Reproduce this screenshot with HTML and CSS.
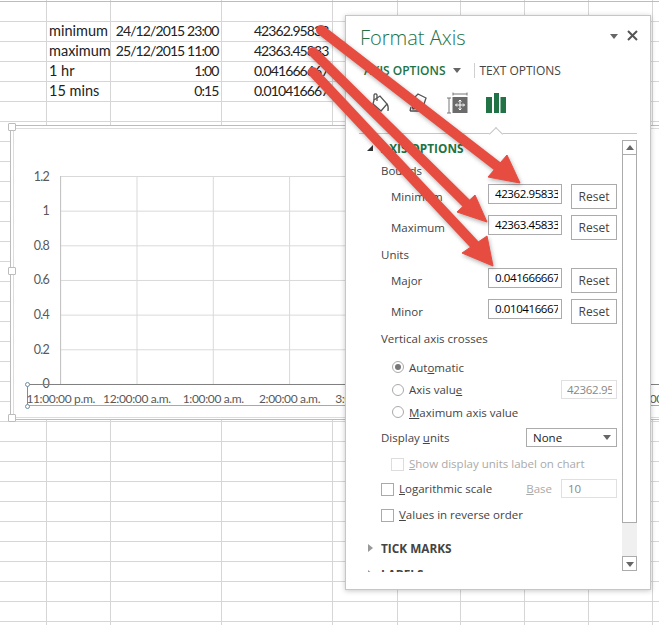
FILE: index.html
```html
<!DOCTYPE html>
<html lang="en">
<head>
<meta charset="utf-8">
<title>Format Axis</title>
<link rel="stylesheet" href="styles.css">
</head>
<body>
<div class="sheet">
  <div class="cells">
    <div></div><div class="cell">minimum</div><div class="cell num">24/12/2015 23:00</div><div class="cell num">42362.95833</div>
    <div></div><div class="cell">maximum</div><div class="cell num">25/12/2015 11:00</div><div class="cell num">42363.45833</div>
    <div></div><div class="cell">1 hr</div><div class="cell num">1:00</div><div class="cell num">0.041666667</div>
    <div></div><div class="cell">15 mins</div><div class="cell num">0:15</div><div class="cell num">0.010416667</div>
  </div>

  <div class="chart">
    <div class="chart-inner"></div>
    <div class="plot"></div>
    <div class="yaxis"><span>1.2</span><span>1</span><span>0.8</span><span>0.6</span><span>0.4</span><span>0.2</span><span>0</span></div>
    <div class="axis-line"></div>
    <div class="axis-box"></div>
    <i class="dot dot-top"></i><i class="dot dot-bottom"></i>
    <div class="xaxis"><span>11:00:00 p.m.</span><span>12:00:00 a.m.</span><span>1:00:00 a.m.</span><span>2:00:00 a.m.</span><span>3:00:00 a.m.</span><span>4:00:00 a.m.</span><span>5:00:00 a.m.</span><span>6:00:00 a.m.</span><span>7:00:00 a.m.</span></div>
    <i class="grip grip-tl"></i><i class="grip grip-ml"></i><i class="grip grip-bl"></i>
  </div>

  <aside class="panel">
    <header class="panel-head">
      <h1 class="panel-title">Format Axis</h1>
      <span class="caret head-caret"></span>
      <svg class="close" width="11" height="11" viewBox="0 0 11 11"><path d="M1 1l9 9M10 1l-9 9" stroke="#555" stroke-width="2" fill="none"/></svg>
    </header>
    <nav class="tabs">
      <span class="tab-active">AXIS OPTIONS</span>
      <span class="caret tab-caret"></span>
      <span class="tab-sep"></span>
      <span class="tab">TEXT OPTIONS</span>
    </nav>
    <div class="icons">
      <svg width="20" height="22" viewBox="0 0 20 22" fill="none" stroke="#555" stroke-width="1.3"><path d="M4 8l6-4 7 8-6 7-8-7z"/><path d="M4 8V3a1.600 1.600 0 0 1 3 0v6"/><path d="M17 12c1.500 2 1.500 4 1 7"/></svg>
      <svg width="20" height="22" viewBox="0 0 20 22" fill="none" stroke="#555" stroke-width="1.3"><path d="M3 9l7-7 8 4-3 9-10 2z"/><path d="M2 19l1-4M2 19h10"/></svg>
      <svg width="22" height="22" viewBox="0 0 22 22"><path d="M7 2h14M7 .5v3M21 .5v3M1 6h4M3 6v15M1 21h4" stroke="#777" fill="none"/><rect x="6.500" y="5" width="15" height="16" fill="#6b6b6b"/><path d="M14 8v10M9.500 13h9M12.500 9.500L14 8l1.500 1.500M12.500 16.500L14 18l1.500-1.500M11 11.500L9.500 13l1.500 1.500M17 11.500l1.500 1.500-1.500 1.500" stroke="#fff" fill="none"/></svg>
      <svg width="21" height="22" viewBox="0 0 21 22"><path d="M0 5h6v16H0zM8 1h5v20H8zM14.500 5H20v16h-5.500z" fill="#217346"/></svg>
    </div>
    <div class="rule"></div>
    <div class="body">
      <div class="content">
        <div class="section section-open"><i class="tri-open"></i>AXIS OPTIONS</div>
        <div class="label">Bounds</div>
        <div class="field field-first"><span class="field-name">Minimum</span><span class="input"><span>42362.95833</span></span><span class="btn">Reset</span></div>
        <div class="field"><span class="field-name">Maximum</span><span class="input"><span>42363.45833</span></span><span class="btn">Reset</span></div>
        <div class="label label-units">Units</div>
        <div class="field field-major"><span class="field-name">Major</span><span class="input"><span>0.041666667</span></span><span class="btn">Reset</span></div>
        <div class="field"><span class="field-name">Minor</span><span class="input"><span>0.010416667</span></span><span class="btn">Reset</span></div>
        <div class="label label-cross">Vertical axis crosses</div>
        <div class="radio radio-first"><i class="radio-mark radio-on"></i>Aut<u>o</u>matic</div>
        <div class="radio"><i class="radio-mark"></i>Axis valu<u>e</u><span class="input-off"><span>42362.95</span></span></div>
        <div class="radio"><i class="radio-mark"></i><u>M</u>aximum axis value</div>
        <div class="units-row"><span>Display <u>u</u>nits</span><span class="select">None<i class="caret select-caret"></i></span></div>
        <div class="check check-off"><i class="box"></i><span><u>S</u>how display units label on chart</span></div>
        <div class="check check-log"><i class="box box-on"></i><span><u>L</u>ogarithmic scale</span><span class="base"><u>B</u>ase</span><span class="input-base">10</span></div>
        <div class="check check-rev"><i class="box box-on"></i><span><u>V</u>alues in reverse order</span></div>
        <div class="section section-tick"><i class="tri-closed"></i>TICK MARKS</div>
        <div class="section section-labels"><i class="tri-closed"></i>LABELS</div>
      </div>
      <div class="scroll">
        <div class="scroll-btn"><i class="arrow-up"></i></div>
        <div class="scroll-thumb"></div>
        <div class="scroll-track"></div>
        <div class="scroll-btn"><i class="arrow-down"></i></div>
      </div>
    </div>
  </aside>

  <svg class="arrows" width="659" height="625" viewBox="0 0 659 625">
    <g fill="#e74c41" stroke="#e74c41" stroke-linejoin="round">
      <path d="M321 30L497 166" stroke-width="10" stroke-linecap="round"/>
      <path d="M520 183L507 155L488 177Z" stroke-width="1"/>
      <path d="M313 52L466 203" stroke-width="10" stroke-linecap="round"/>
      <path d="M487 222L475 195L457 212Z" stroke-width="1"/>
      <path d="M313 72L474 244" stroke-width="10" stroke-linecap="round"/>
      <path d="M493 266L487 236L462 253Z" stroke-width="1"/>
    </g>
  </svg>
</div>
</body>
</html>
```
FILE: styles.css
```css
* { box-sizing: border-box; }
html, body { margin: 0; padding: 0; background: #fff; }
body { width: 659px; height: 625px; overflow: hidden; }
i { display: block; font-style: normal; }

.sheet {
  position: relative;
  width: 659px;
  height: 625px;
  overflow: hidden;
  padding-top: 21px;
  font-family: Lato, sans-serif;
  color: #222;
  background-color: #fff;
  --g: linear-gradient(#d6d6d6, #d6d6d6);
  background-image:
    linear-gradient(#bdbdbd, #bdbdbd),
    var(--g), var(--g), var(--g), var(--g), var(--g), var(--g), var(--g), var(--g), var(--g),
    linear-gradient(to top, #d6d6d6 1px, transparent 1px);
  background-repeat: no-repeat, no-repeat, no-repeat, no-repeat, no-repeat, no-repeat, no-repeat, no-repeat, no-repeat, no-repeat, repeat-y;
  background-size: 100% 1px, 1px 100%, 1px 100%, 1px 100%, 1px 100%, 1px 100%, 1px 100%, 1px 100%, 1px 100%, 1px 100%, 100% 20px;
  background-position: 0 1px, 46px 0, 110px 0, 221px 0, 332px 0, 397px 0, 460px 0, 524px 0, 588px 0, 652px 0, 0 2px;
}

.cells {
  display: grid;
  grid-template-columns: minmax(0, 49px) minmax(0, 61px) minmax(0, 111px) minmax(0, 110px);
  width: 331px;
  grid-auto-rows: 20px;
  font-size: 14.500px;
  line-height: 20px;
  color: #222;
}
.cell { white-space: nowrap; min-width: 0; }
.num {
  text-align: right;
  padding-right: 2.500px;
  font-size: 14px;
  letter-spacing: -.9px;
}

/* chart */
.chart {
  position: absolute;
  left: 10px;
  top: 125px;
  width: 720px;
  height: 295px;
  background: #fff;
  border: 1.500px solid #bcbcbc;
  border-right: 0;
  font-size: 12px;
  color: #595959;
}
.chart-inner {
  position: absolute;
  inset: 1.500px 0 1px 1.500px;
  border: 1px solid #dcdcdc;
  border-right: 0;
}
.plot {
  position: absolute;
  left: 49px;
  top: 49.500px;
  width: 320px;
  height: 208px;
  border-left: 1px solid #c4c4c4;
  background-image:
    linear-gradient(#d9d9d9 1px, transparent 1px),
    linear-gradient(to right, #d9d9d9 1px, transparent 1px);
  background-size: 100% 34.670px, 76.300px 100%;
  background-position: 0 0, 75.500px 0;
}
.yaxis {
  position: absolute;
  left: 8px;
  top: 41.500px;
  width: 30px;
  height: 226px;
  display: flex;
  flex-direction: column;
  justify-content: space-between;
  align-items: flex-end;
  font-size: 12.500px;
  letter-spacing: -.7px;
  line-height: 18px;
}
.axis-line {
  position: absolute;
  left: 17px;
  top: 257.500px;
  right: 0;
  height: 1px;
  background: #808080;
}
.axis-box {
  position: absolute;
  left: 16px;
  top: 258px;
  right: 0;
  height: 22px;
  border-left: 1px solid #8a8a8a;
  border-bottom: 1px solid #a8a8a8;
}
.dot {
  position: absolute;
  left: 14px;
  width: 5px;
  height: 5px;
  border: 1px solid #6b8ea6;
  border-radius: 50%;
  background: #fff;
}
.dot-top { top: 255.500px; }
.dot-bottom { top: 277.500px; }
.xaxis {
  position: absolute;
  left: 11.500px;
  top: 265px;
  display: flex;
  white-space: nowrap;
  line-height: 16px;
  letter-spacing: -.35px;
}
.xaxis span { width: 76.300px; text-align: center; flex: none; }
.grip {
  position: absolute;
  left: -3px;
  width: 8px;
  height: 8px;
  background: #fff;
  border: 1px solid #bcbcbc;
  border-radius: 1px;
}
.grip-tl { top: -3px; }
.grip-ml { top: 141px; }
.grip-bl { top: 288px; }

/* panel */
.panel {
  position: absolute;
  left: 345px;
  top: 15px;
  width: 306px;
  height: 575px;
  display: flex;
  flex-direction: column;
  background: #fff;
  border: 1px solid #c6c6c6;
  box-shadow: 0 1px 5px rgba(0, 0, 0, .22);
  font-family: "Open Sans", sans-serif;
  font-size: 11.500px;
  color: #444;
}
.panel-head {
  height: 44px;
  display: flex;
  align-items: center;
  padding: 0 12px 0 14px;
}
.panel-title {
  margin: 0;
  font-size: 20px;
  font-weight: 300;
  color: #217346;
  flex: 1;
  line-height: 44px;
}
.caret {
  width: 0;
  height: 0;
  border-left: 4.500px solid transparent;
  border-right: 4.500px solid transparent;
  border-top: 5px solid #666;
}
.head-caret { margin-right: 9px; margin-top: -4px; }
.close { margin-top: -5px; }
.tabs {
  height: 20px;
  display: flex;
  align-items: center;
  padding-left: 18px;
}
.tab-active { font-weight: 600; color: #217346; font-size: 12px; }
.tab-caret { margin-left: 7px; }
.tab-sep { width: 1px; height: 15px; background: #d0d0d0; margin: 0 5px 0 13px; }
.tab { font-size: 12px; }
.icons {
  height: 46px;
  display: flex;
  align-items: flex-start;
  padding: 12px 0 0 24px;
  gap: 18px;
}
.rule {
  position: relative;
  height: 8px;
  margin: 0 13px;
  border-bottom: 1px solid #c6c6c6;
}
.rule::after {
  content: "";
  position: absolute;
  left: 132px;
  top: 3px;
  width: 9px;
  height: 9px;
  background: #fff;
  border-left: 1px solid #c6c6c6;
  border-top: 1px solid #c6c6c6;
  transform: rotate(45deg);
}
.body {
  height: 438px;
  display: flex;
  align-items: flex-start;
}
.content {
  width: 276px;
  height: 438px;
  overflow: hidden;
  padding: 0 5px 0 35px;
}
.section {
  position: relative;
  height: 28px;
  line-height: 28px;
  font-weight: 700;
  font-size: 11.800px;
}
.section-open { color: #217346; }
.section-tick { margin-top: 9px; }
.section-labels { margin-top: -1.500px; }
.tri-open {
  position: absolute;
  left: -14px;
  top: 11px;
  width: 6px;
  height: 6px;
  background: #333;
  clip-path: polygon(100% 0, 100% 100%, 0 100%);
}
.tri-closed {
  position: absolute;
  left: -13px;
  top: 10px;
  width: 0;
  height: 0;
  border-top: 4.500px solid transparent;
  border-bottom: 4.500px solid transparent;
  border-left: 5px solid #999;
}
.label { height: 18px; line-height: 18px; white-space: nowrap; }
.label-units { margin-top: 6px; }
.label-cross { margin-top: 6px; }
.field {
  height: 25px;
  margin-top: 6px;
  padding-left: 10px;
  display: flex;
  align-items: flex-start;
  gap: 9px;
}
.field-first { margin-top: 4px; }
.field-major { margin-top: 4px; }
.field-name { flex: 1; line-height: 25px; }
.input {
  width: 74px;
  height: 20px;
  border: 1px solid #ababab;
  padding: 0 3px 0 6px;
  color: #000;
  line-height: 18px;
  font-size: 11.500px;
  letter-spacing: -.4px;
  flex: none;
}
.input span { display: block; overflow: hidden; white-space: nowrap; }
.btn {
  width: 46px;
  height: 25px;
  border: 1px solid #ababab;
  text-align: center;
  line-height: 24px;
  flex: none;
  font-size: 12px;
}
.radio {
  height: 22.500px;
  padding-left: 28px;
  position: relative;
  display: flex;
  align-items: center;
}
.radio-first { margin-top: 8px; }
.radio-mark {
  position: absolute;
  left: 11px;
  top: 5px;
  width: 12px;
  height: 12px;
  border: 1px solid #aaa;
  border-radius: 50%;
}
.radio-on::after {
  content: "";
  display: block;
  margin: 2px;
  width: 6px;
  height: 6px;
  border-radius: 50%;
  background: #777;
}
.input-off {
  margin-left: auto;
  width: 56px;
  height: 19px;
  border: 1px solid #e0e0e0;
  color: #888;
  line-height: 17px;
  padding: 0 4px 0 5px;
  letter-spacing: -.3px;
}
.input-off span { display: block; overflow: hidden; white-space: nowrap; }
.units-row {
  margin-top: 4px;
  height: 20px;
  display: flex;
  align-items: center;
  justify-content: space-between;
}
.select {
  position: relative;
  width: 91px;
  height: 19px;
  border: 1px solid #ababab;
  padding-left: 6px;
  line-height: 17px;
  color: #222;
}
.select-caret { position: absolute; right: 5px; top: 6px; }
.check {
  position: relative;
  height: 20px;
  display: flex;
  align-items: center;
  white-space: nowrap;
  padding-left: 18px;
}
.check-off { margin-top: 6px; padding-left: 28px; color: #aaa; }
.check-off .box { left: 10px; border-color: #ddd; }
.check-log { margin-top: 5px; }
.check-rev { margin-top: 6px; }
.box {
  position: absolute;
  left: 0;
  top: 4px;
  width: 13px;
  height: 13px;
  border: 1px solid #c9c9c9;
}
.box-on { border-color: #aaa; }
.base { margin-left: auto; color: #aaa; margin-right: 9px; }
.input-base {
  width: 56px;
  height: 19px;
  border: 1px solid #e0e0e0;
  padding-left: 6px;
  line-height: 17px;
  color: #888;
  flex: none;
}
.scroll {
  width: 15px;
  height: 431px;
  margin-top: 6px;
  display: flex;
  flex-direction: column;
  flex: none;
}
.scroll-btn {
  height: 15px;
  border: 1px solid #ababab;
  flex: none;
  position: relative;
}
.scroll-thumb {
  height: 368px;
  border: 1px solid #ababab;
  border-top: 0;
  flex: none;
}
.scroll-track { flex: 1; background: #f0f0f0; }
.arrow-up, .arrow-down {
  position: absolute;
  left: 2.500px;
  width: 0;
  height: 0;
  border-left: 4px solid transparent;
  border-right: 4px solid transparent;
}
.arrow-up { top: 4px; border-bottom: 5px solid #666; }
.arrow-down { top: 5px; border-top: 5px solid #666; }

/* annotation arrows lying over the screenshot */
.arrows {
  position: absolute;
  left: 0;
  top: 0;
  filter: drop-shadow(1px 2px 2px rgba(0, 0, 0, .3));
}
```
